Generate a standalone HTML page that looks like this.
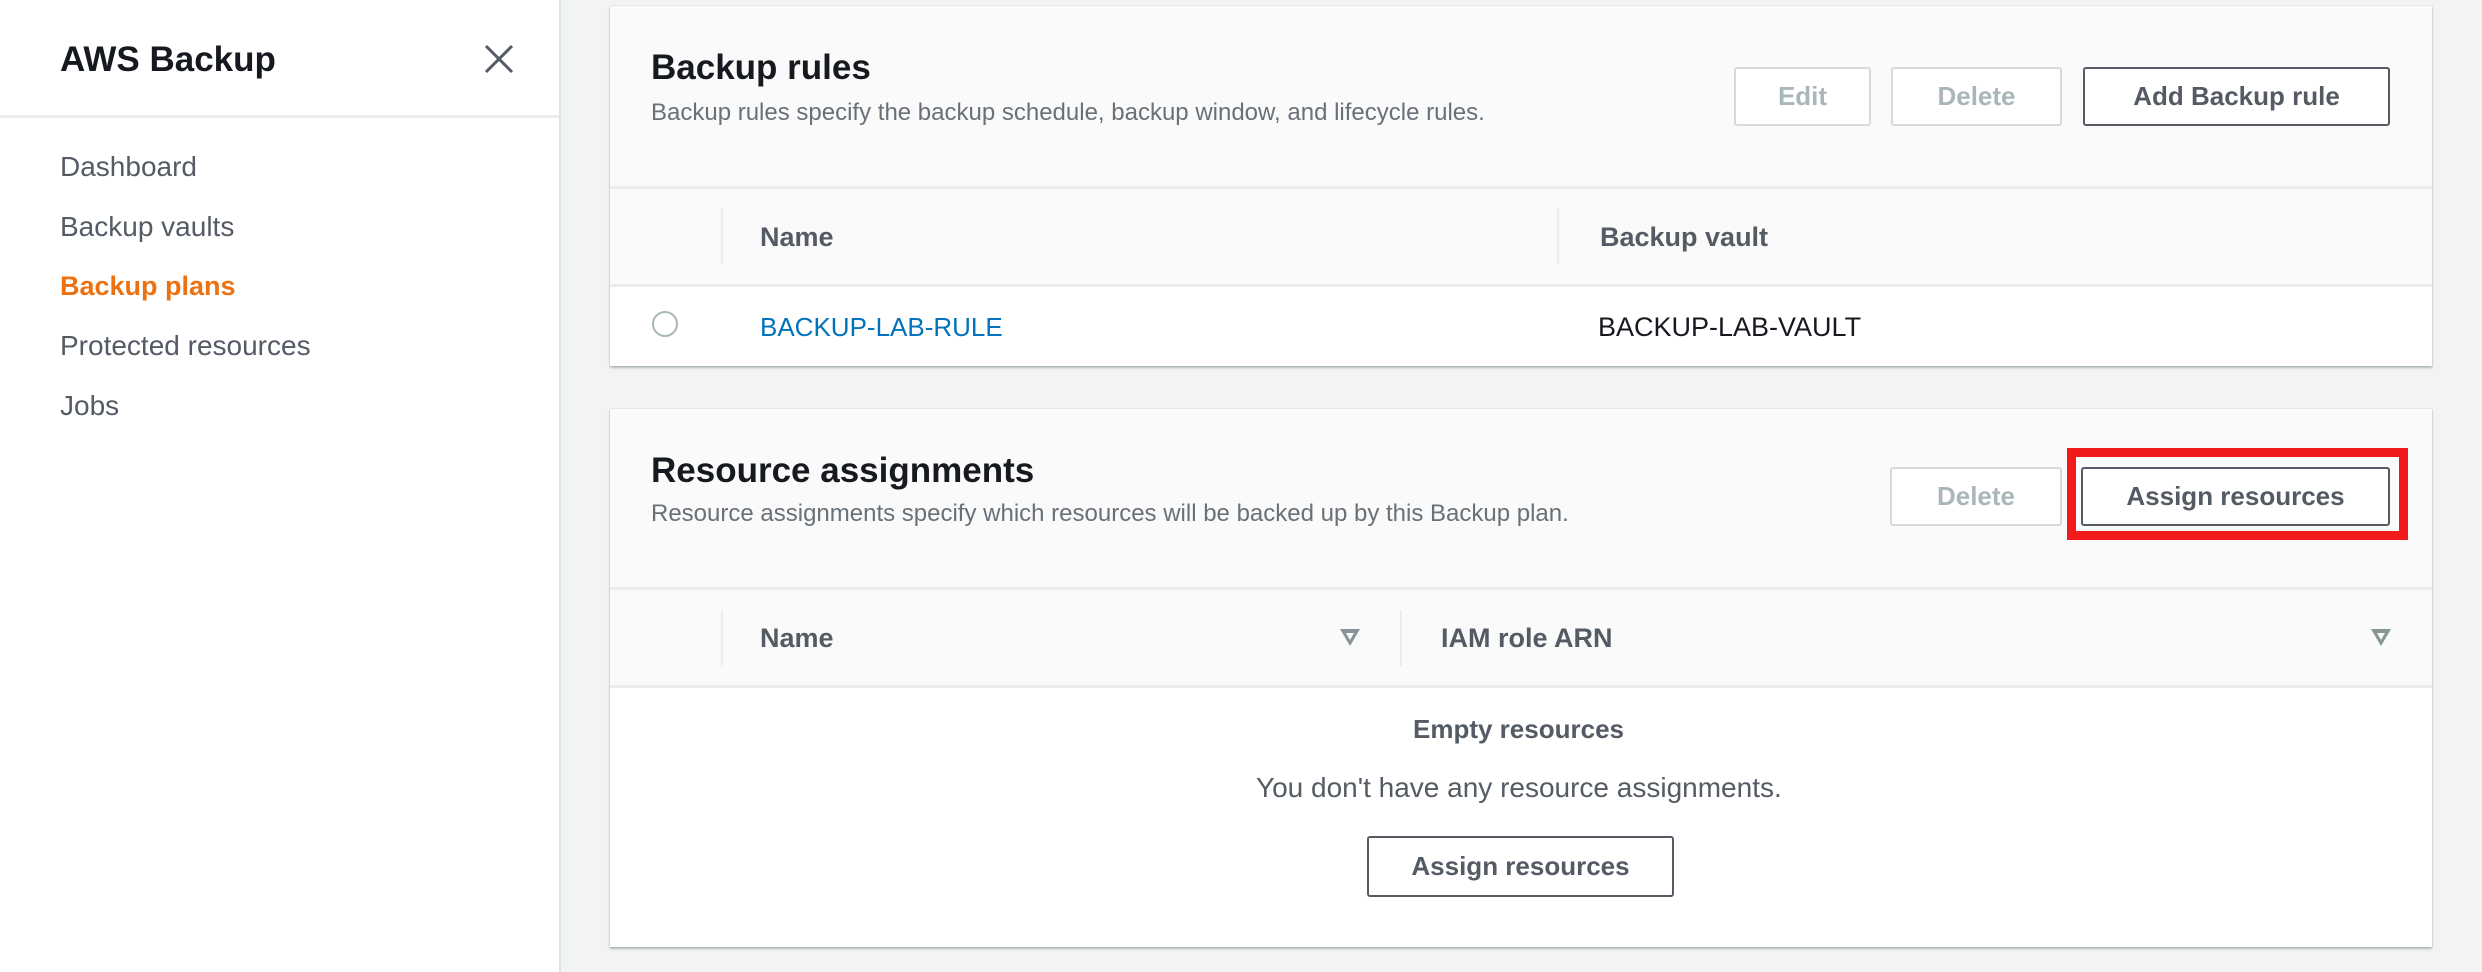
<!DOCTYPE html>
<html><head><meta charset="utf-8"><style>
*{box-sizing:border-box;margin:0;padding:0}
body{width:2482px;height:972px;overflow:hidden;background:#f2f3f3;font-family:"Liberation Sans",sans-serif;position:relative;color:#545b64}
.a{position:absolute;white-space:nowrap}
#side{left:0;top:0;width:561px;height:972px;background:#fff;border-right:2px solid #dfe2e2}
.nav{left:60px;font-size:28px;color:#545b64;line-height:1}
.card{position:absolute;left:610px;width:1822px;background:#fafafa;box-shadow:0 2px 2px rgba(0,33,43,.25),0 0 1px rgba(0,28,36,.3)}
.btn{position:absolute;height:59px;border:2px solid #545b64;border-radius:3px;background:#fff;font-weight:bold;font-size:26px;display:flex;align-items:center;justify-content:center;color:#545b64}
.dis{border-color:#d5dbdb;color:#aab7b8}
.h2{font-size:35px;font-weight:bold;color:#16191f}
.desc{font-size:24px;color:#687078}
.th{font-size:27px;font-weight:bold;color:#545b64}
.sep{position:absolute;width:2px;background:#eaeded}
.line{position:absolute;left:0;width:100%;height:3px;background:#eaeded}
.tri{position:absolute;width:0;height:0;border-left:10px solid transparent;border-right:10px solid transparent;border-top:17px solid #879596}
.tri:after{content:"";position:absolute;left:-4px;top:-13px;border-left:4px solid transparent;border-right:4px solid transparent;border-top:7px solid #fafafa}
</style></head><body>
<div class="a" id="side"></div>
<div class="a" style="left:60px;top:40px;font-size:35px;font-weight:bold;color:#16191f">AWS Backup</div>
<svg class="a" style="left:484px;top:44px" width="30" height="30" viewBox="0 0 30 30"><path d="M2 2L28 28M28 2L2 28" stroke="#545b64" stroke-width="3"/></svg>
<div class="a" style="left:0;top:115px;width:559px;height:3px;background:#eaeded"></div>
<div class="a nav" style="top:153px">Dashboard</div>
<div class="a nav" style="top:213px">Backup vaults</div>
<div class="a nav" style="top:273px;color:#ec7211;font-weight:bold;font-size:27px">Backup plans</div>
<div class="a nav" style="top:332px">Protected resources</div>
<div class="a nav" style="top:392px">Jobs</div>

<div class="card" style="top:6px;height:360px">
 <div class="a h2" style="left:41px;top:42px">Backup rules</div>
 <div class="a desc" style="left:41px;top:93px">Backup rules specify the backup schedule, backup window, and lifecycle rules.</div>
 <div class="btn dis" style="left:1124px;top:61px;width:137px">Edit</div>
 <div class="btn dis" style="left:1281px;top:61px;width:171px">Delete</div>
 <div class="btn" style="left:1473px;top:61px;width:307px">Add Backup rule</div>
 <div class="line" style="top:180px"></div>
 <div class="sep" style="left:111px;top:202px;height:56px"></div>
 <div class="sep" style="left:947px;top:202px;height:56px"></div>
 <div class="a th" style="left:150px;top:216px">Name</div>
 <div class="a th" style="left:990px;top:216px">Backup vault</div>
 <div class="line" style="top:278px"></div>
 <div class="a" style="left:0;top:281px;width:100%;height:79px;background:#fff"></div>
 <div class="a" style="left:42px;top:305px;width:26px;height:26px;border:2px solid #aab7b8;border-radius:50%"></div>
 <div class="a" style="left:150px;top:306px;font-size:26px;color:#0073bb">BACKUP-LAB-RULE</div>
 <div class="a" style="left:988px;top:306px;font-size:27px;color:#16191f">BACKUP-LAB-VAULT</div>
</div>

<div class="card" style="top:409px;height:538px">
 <div class="a h2" style="left:41px;top:42px">Resource assignments</div>
 <div class="a desc" style="left:41px;top:91px">Resource assignments specify which resources will be backed up by this Backup plan.</div>
 <div class="btn dis" style="left:1280px;top:58px;width:172px">Delete</div>
 <div class="a" style="left:1457px;top:39px;width:341px;height:92px;border:9px solid #f21b1b"></div>
 <div class="btn" style="left:1471px;top:58px;width:309px">Assign resources</div>
 <div class="line" style="top:178px"></div>
 <div class="sep" style="left:111px;top:201px;height:56px"></div>
 <div class="sep" style="left:790px;top:201px;height:56px"></div>
 <div class="a th" style="left:150px;top:214px">Name</div>
 <div class="tri" style="left:730px;top:220px"></div>
 <div class="a th" style="left:831px;top:214px">IAM role ARN</div>
 <div class="tri" style="left:1761px;top:220px"></div>
 <div class="line" style="top:276px"></div>
 <div class="a" style="left:0;top:279px;width:100%;height:259px;background:#fff"></div>
 <div class="a" style="left:803px;top:305px;font-size:26px;font-weight:bold;color:#545b64">Empty resources</div>
 <div class="a" style="left:646px;top:363px;font-size:28px;color:#545b64">You don't have any resource assignments.</div>
 <div class="btn" style="left:757px;top:427px;width:307px;height:61px">Assign resources</div>
</div>
</body></html>
